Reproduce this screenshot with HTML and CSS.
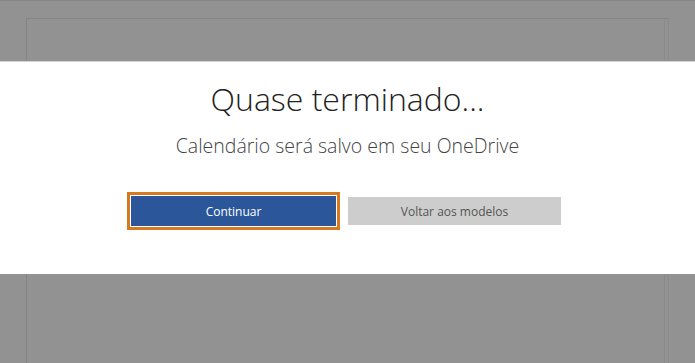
FILE: index.html
```html
<!DOCTYPE html>
<html lang="pt">
<head>
<meta charset="utf-8">
<link rel="stylesheet" href="styles.css">
</head>
<body>
<div class="topline"></div>
<div class="sheet"></div>
<div class="overlay">
  <h1 class="title">Quase terminado...</h1>
  <p class="subtitle">Calendário será salvo em seu OneDrive</p>
  <div class="actions">
    <button class="btn btn-primary">Continuar</button>
    <button class="btn btn-secondary">Voltar aos modelos</button>
  </div>
</div>
</body>
</html>
```
FILE: styles.css
```css
html, body {
  margin: 0;
  padding: 0;
  height: 363px;
  overflow: hidden;
  background: #929292;
  font-family: "Open Sans", "Noto Sans", sans-serif;
}
.topline {
  height: 1px;
  background: #878787;
}
.sheet {
  margin: 17px 0 0 26px;
  width: 643px;
  height: 345px;
  border-left: 1px solid #858585;
  border-top: 1px solid #858585;
  border-right: 1px solid #8a8a8a;
  box-shadow: inset -3px 0 0 #929292, inset -4px 0 0 #8a8a8a;
  box-sizing: border-box;
}
.overlay {
  position: absolute;
  left: 0;
  top: 61px;
  width: 100%;
  height: 213px;
  background: #fff;
  border-top: 1px solid #d4d4d4;
  box-sizing: border-box;
  text-align: center;
}
.title {
  margin: 15px 0 0;
  font-weight: 300;
  font-size: 32px;
  line-height: 44px;
  color: #222;
}
.subtitle {
  margin: 12px 0 0;
  font-weight: 300;
  font-size: 19.5px;
  line-height: 26px;
  color: #444;
}
.actions {
  display: flex;
  justify-content: center;
  align-items: center;
  gap: 12px;
  margin-top: 37px;
  padding-right: 3px;
}
.btn {
  border: 0;
  margin: 0;
  font-family: inherit;
  font-size: 12px;
  cursor: pointer;
}
.btn-primary {
  width: 205px;
  height: 30px;
  background: #2b579a;
  color: #fff;
  box-shadow: 0 0 0 1px #fff, 0 0 0 4px #d6791f;
}
.btn-secondary {
  width: 213px;
  height: 28px;
  background: #cdcdcd;
  color: #555;
}
```
